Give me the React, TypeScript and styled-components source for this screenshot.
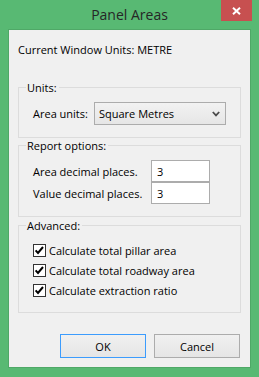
import React from "react";
import styled, { createGlobalStyle } from "styled-components";

const GlobalStyle = createGlobalStyle`
  html, body { margin: 0; padding: 0; background: #58b973; }
  body { font-family: "Open Sans", "Noto Sans", sans-serif; }
  * { box-sizing: border-box; }
`;

const Window = styled.div`
  width: 259px;
  height: 377px;
  background: #58b973;
  display: flex;
  flex-direction: column;
  padding: 0 8px 9px 8px;
`;

const TitleBar = styled.div`
  height: 30px;
  margin: 0 -8px;
  display: grid;
  grid-template-columns: 1fr auto 1fr;
  align-items: start;
`;

const Title = styled.div`
  grid-column: 2;
  font-size: 14px;
  line-height: 29px;
  color: #262626;
  white-space: nowrap;
`;

const CloseButton = styled.div`
  grid-column: 3;
  justify-self: end;
  width: 31px;
  height: 21px;
  margin-right: 7px;
  background: #c75050;
  display: flex;
  align-items: center;
  justify-content: center;
`;

const Client = styled.div`
  flex: 1;
  background: #f0f0f0;
  border: 1px solid #4fa867;
  padding: 12px 9px 9px 9px;
  display: flex;
  flex-direction: column;
  font-size: 11px;
  line-height: 15px;
  color: #000;
`;

const Heading = styled.div`
  margin-bottom: 23px;
  white-space: nowrap;
`;

const Group = styled.fieldset<{ $mt?: number }>`
  margin: ${(p) => p.$mt ?? 0}px 0 0 0;
  padding: ${(p) => "7px 12px 12px 7px"};
  border: 1px solid #dcdcdc;
  min-width: 0;
`;

const Legend = styled.legend`
  padding: 0 2px 0 1px;
  font-size: 11px;
  line-height: 15px;
`;

const Body = styled.div<{ $pt?: number }>`
  padding-left: 7px;
  margin-top: ${(p) => p.$pt ?? 0}px;
  display: flex;
  flex-direction: column;
`;

const FieldRow = styled.div<{ $h: number }>`
  display: flex;
  align-items: center;
  height: ${(p) => p.$h}px;
`;

const Label = styled.span<{ $w: number }>`
  width: ${(p) => p.$w}px;
  white-space: nowrap;
`;

const Select = styled.div`
  width: 132px;
  height: 23px;
  border: 1px solid #acacac;
  background: linear-gradient(#f2f2f2, #e6e6e6);
  display: flex;
  align-items: center;
  justify-content: space-between;
  padding: 0 5px 0 4px;
`;

const Input = styled.div`
  width: 59px;
  height: 22px;
  border: 1px solid #acacac;
  background: #fff;
  display: flex;
  align-items: center;
  padding: 0 5px;
`;

const CheckRow = styled.div`
  display: flex;
  align-items: center;
  height: 20px;
  gap: 3px;
  white-space: nowrap;
`;

const ButtonRow = styled.div`
  margin-top: 21px;
  margin-right: 1px;
  display: flex;
  justify-content: flex-end;
  gap: 8px;
`;

const Button = styled.div<{ $default?: boolean }>`
  width: 86px;
  height: 24px;
  border: 1px solid ${(p) => (p.$default ? "#3c9cfd" : "#acacac")};
  background: linear-gradient(#f0f0f0, #e5e5e5);
  display: flex;
  align-items: center;
  justify-content: center;
`;

const Chevron = () => (
  <svg width="8" height="6" viewBox="0 0 8 6">
    <path d="M0.8 1 L4 4.4 L7.2 1" fill="none" stroke="#4a4a4a" strokeWidth="1.8" />
  </svg>
);

const CloseX = () => (
  <svg width="9" height="8" viewBox="0 0 9 8">
    <path d="M1 0.8 L8 7.2 M8 0.8 L1 7.2" stroke="#fff" strokeWidth="2" />
  </svg>
);

const CheckBox = () => (
  <svg width="13" height="13" viewBox="0 0 13 13">
    <rect x="0.5" y="0.5" width="12" height="12" fill="#fff" stroke="#333" />
    <path d="M2.6 6.4 L5 9 L10 3" fill="none" stroke="#000" strokeWidth="2" />
  </svg>
);

export default function App() {
  return (
    <>
      <GlobalStyle />
      <Window>
        <TitleBar>
          <Title>Panel Areas</Title>
          <CloseButton>
            <CloseX />
          </CloseButton>
        </TitleBar>
        <Client>
          <Heading>Current Window Units: METRE</Heading>
          <Group>
            <Legend>Units:</Legend>
            <Body>
              <FieldRow $h={23}>
                <Label $w={61}>Area units:</Label>
                <Select>
                  <span>Square Metres</span>
                  <Chevron />
                </Select>
              </FieldRow>
            </Body>
          </Group>
          <Group>
            <Legend>Report options:</Legend>
            <Body>
              <FieldRow $h={22}>
                <Label $w={118}>Area decimal places.</Label>
                <Input>3</Input>
              </FieldRow>
              <FieldRow $h={22}>
                <Label $w={118}>Value decimal places.</Label>
                <Input>3</Input>
              </FieldRow>
            </Body>
          </Group>
          <Group $mt={1}>
            <Legend>Advanced:</Legend>
            <Body>
              <CheckRow>
                <CheckBox />
                <span>Calculate total pillar area</span>
              </CheckRow>
              <CheckRow>
                <CheckBox />
                <span>Calculate total roadway area</span>
              </CheckRow>
              <CheckRow>
                <CheckBox />
                <span>Calculate extraction ratio</span>
              </CheckRow>
            </Body>
          </Group>
          <ButtonRow>
            <Button $default>OK</Button>
            <Button>Cancel</Button>
          </ButtonRow>
        </Client>
      </Window>
    </>
  );
}
